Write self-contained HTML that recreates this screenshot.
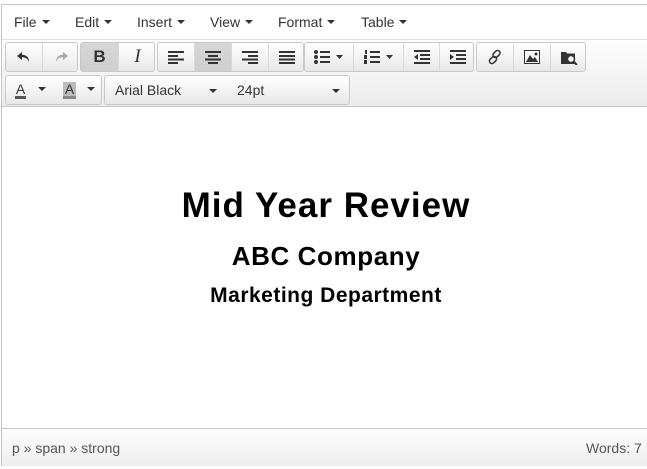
<!DOCTYPE html>
<html><head><meta charset="utf-8"><style>
*{box-sizing:border-box;margin:0;padding:0}
body{width:647px;height:469px;background:#fff;font-family:"Liberation Sans",Arial,sans-serif;position:relative;overflow:hidden;color:#333}
.frame{position:absolute;left:1px;top:4px;width:660px;height:462px;border:1px solid #c5c5c5;background:#fff}
.menubar{position:absolute;left:0;top:0;width:100%;height:35px;border-bottom:1px solid #e2e2e2;background:#fff}
.menubar span{position:absolute;top:9px;font-size:14px;color:#333}
.car{display:inline-block;width:0;height:0;border-left:4px solid transparent;border-right:4px solid transparent;border-top:4px solid #333;vertical-align:middle;margin-left:5px;margin-top:-2px}
.tb{position:absolute;left:0;top:35px;width:100%;height:67px;background:linear-gradient(#fdfdfd,#ececec);border-bottom:1px solid #c5c5c5}
.g{position:absolute;border:1px solid #c8c8c8;border-radius:3px;background:linear-gradient(#fff,#e8e8e8);overflow:hidden}
.b{position:absolute;top:0;height:100%;border-left:1px solid #d9d9d9;display:flex;align-items:center;justify-content:center}
.b.first{border-left:none}
.b.on{background:linear-gradient(#d6d6d6,#cfcfcf)}
.content{position:absolute;left:0;top:102px;width:100%;height:323px;background:#fff}
.t{position:absolute;left:0;width:652px;text-align:center;font-weight:bold;color:#000;line-height:1;white-space:nowrap}
.status{position:absolute;left:0;top:423px;width:100%;height:38px;border-top:1px solid #c5c5c5;background:linear-gradient(#fdfdfd,#eee)}
.status span{position:absolute;top:11px;font-size:14px;color:#555}
</style></head><body>
<div class="frame">
 <div class="menubar">
  <span style="left:12px">File<i class="car"></i></span>
  <span style="left:73px">Edit<i class="car"></i></span>
  <span style="left:135px">Insert<i class="car"></i></span>
  <span style="left:208px">View<i class="car"></i></span>
  <span style="left:276px">Format<i class="car"></i></span>
  <span style="left:359px">Table<i class="car"></i></span>
 </div>
 <div class="tb">
  <div class="g" style="left:3px;top:2px;width:73px;height:30px">
   <div class="b first" style="left:0;width:36px"><svg width="14" height="12" viewBox="0 0 14 12"><path d="M5 1 L0 5 L5 9 V6.3 C8.5 6.3 10.5 7.5 12 11 C12 6 9 3.7 5 3.7 Z" fill="#333"/></svg></div>
   <div class="b" style="left:36px;width:37px"><svg width="14" height="12" viewBox="0 0 14 12"><path d="M9 1 L14 5 L9 9 V6.3 C5.5 6.3 3.5 7.5 2 11 C2 6 5 3.7 9 3.7 Z" fill="#aaa"/></svg></div>
  </div>
  <div class="g" style="left:78px;top:2px;width:75px;height:30px">
   <div class="b first on" style="left:0;width:37px;font-weight:bold;font-size:17px;color:#333">B</div>
   <div class="b" style="left:37px;width:38px;font-style:italic;font-family:'Liberation Serif',serif;font-size:19px;color:#333">I</div>
  </div>
  <div class="g" style="left:155px;top:2px;width:147px;height:30px">
   <div class="b first" style="left:0;width:36px"><svg width="16" height="13"><g fill="#333"><rect y="0" width="16" height="2"/><rect y="4" width="10" height="2"/><rect y="7.5" width="16" height="2"/><rect y="11" width="10" height="2"/></g></svg></div>
   <div class="b on" style="left:36px;width:37px"><svg width="16" height="13"><g fill="#333"><rect y="0" width="16" height="2"/><rect x="3" y="4" width="10" height="2"/><rect y="7.5" width="16" height="2"/><rect x="3" y="11" width="10" height="2"/></g></svg></div>
   <div class="b" style="left:73px;width:37px"><svg width="16" height="13"><g fill="#333"><rect y="0" width="16" height="2"/><rect x="6" y="4" width="10" height="2"/><rect y="7.5" width="16" height="2"/><rect x="6" y="11" width="10" height="2"/></g></svg></div>
   <div class="b" style="left:110px;width:37px"><svg width="16" height="13"><g fill="#333"><rect y="0" width="16" height="2"/><rect y="4" width="16" height="2"/><rect y="7.5" width="16" height="2"/><rect y="11" width="16" height="2"/></g></svg></div>
  </div>
  <div class="g" style="left:302px;top:2px;width:170px;height:30px">
   <div class="b first" style="left:0;width:48px"><svg width="30" height="14"><g fill="#333"><circle cx="2" cy="2" r="2"/><circle cx="2" cy="7" r="2"/><circle cx="2" cy="12" r="2"/><rect x="6" y="1" width="10" height="2"/><rect x="6" y="6" width="10" height="2"/><rect x="6" y="11" width="10" height="2"/><path d="M22 5h7l-3.5 4z"/></g></svg></div>
   <div class="b" style="left:48px;width:50px"><svg width="30" height="14"><g fill="#333"><rect x="1" y="0" width="2" height="4"/><rect x="0" y="5" width="3" height="4"/><rect x="0" y="10" width="3" height="4"/><rect x="6" y="1" width="10" height="2"/><rect x="6" y="6" width="10" height="2"/><rect x="6" y="11" width="10" height="2"/><path d="M22 5h7l-3.5 4z"/></g></svg></div>
   <div class="b" style="left:98px;width:36px"><svg width="16" height="14"><g fill="#333"><rect width="16" height="2"/><rect x="6" y="4" width="10" height="2"/><rect x="6" y="8" width="10" height="2"/><rect y="12" width="16" height="2"/><path d="M4 4v6l-4-3z"/></g></svg></div>
   <div class="b" style="left:134px;width:36px"><svg width="16" height="14"><g fill="#333"><rect width="16" height="2"/><rect x="6" y="4" width="10" height="2"/><rect x="6" y="8" width="10" height="2"/><rect y="12" width="16" height="2"/><path d="M0 4v6l4-3z"/></g></svg></div>
  </div>
  <div class="g" style="left:474px;top:2px;width:110px;height:30px">
   <div class="b first" style="left:0;width:36px"><svg width="16" height="16" viewBox="0 0 16 16"><g fill="none" stroke="#333" stroke-width="1.5"><rect x="7" y="1" width="5" height="8" rx="2.5" transform="rotate(45 9.5 5)"/><rect x="3.5" y="7" width="5" height="8" rx="2.5" transform="rotate(45 6 11)"/></g></svg></div>
   <div class="b" style="left:36px;width:37px"><svg width="16" height="14"><rect x="0.5" y="0.5" width="15" height="13" fill="none" stroke="#333"/><path d="M2 12 L6 5 L9 9 L11 7 L14 12Z" fill="#333"/><circle cx="12" cy="4" r="1.5" fill="#333"/></svg></div>
   <div class="b" style="left:73px;width:37px"><svg width="17" height="15"><path d="M0 2h5l1 1.5h8V14H0Z" fill="#333"/><circle cx="10" cy="9" r="3.5" fill="#fff" stroke="#333" stroke-width="1.5"/><path d="M12.5 11.5 L16 15" stroke="#333" stroke-width="2"/></svg></div>
  </div>
  <div class="g" style="left:3px;top:35px;width:97px;height:30px">
   <div class="b first" style="left:0;width:49px"><span style="font-size:14px;color:#333;border-bottom:3px solid #555;line-height:14px;padding:0 1px">A</span><i class="car" style="margin-left:12px"></i></div>
   <div class="b" style="left:49px;width:48px;border-left:none"><span style="font-size:14px;color:#333;background:#bbb;border-bottom:3px solid #888;line-height:14px;padding:0 2px">A</span><i class="car" style="margin-left:11px"></i></div>
  </div>
  <div class="g" style="left:102px;top:35px;width:246px;height:30px">
   <div class="b first" style="left:0;width:123px;justify-content:flex-start;padding-left:10px;font-size:14px;color:#333">Arial Black<i class="car" style="position:absolute;left:104px;top:13px;margin:0"></i></div>
   <div class="b" style="left:123px;width:123px;justify-content:flex-start;padding-left:9px;font-size:14px;color:#333;border-left:none">24pt<i class="car" style="position:absolute;left:104px;top:13px;margin:0"></i></div>
  </div>
 </div>
 <div class="content"></div>
 <div class="status">
  <span style="left:10px">p » span » strong</span>
  <span style="left:584px">Words: 7</span>
 </div>
</div>
<div class="t" style="top:188px;font-size:35px;letter-spacing:1px">Mid Year Review</div>
<div class="t" style="top:243px;font-size:26px;letter-spacing:0.6px">ABC Company</div>
<div class="t" style="top:285px;font-size:21px;letter-spacing:0.5px">Marketing Department</div>
</body></html>
